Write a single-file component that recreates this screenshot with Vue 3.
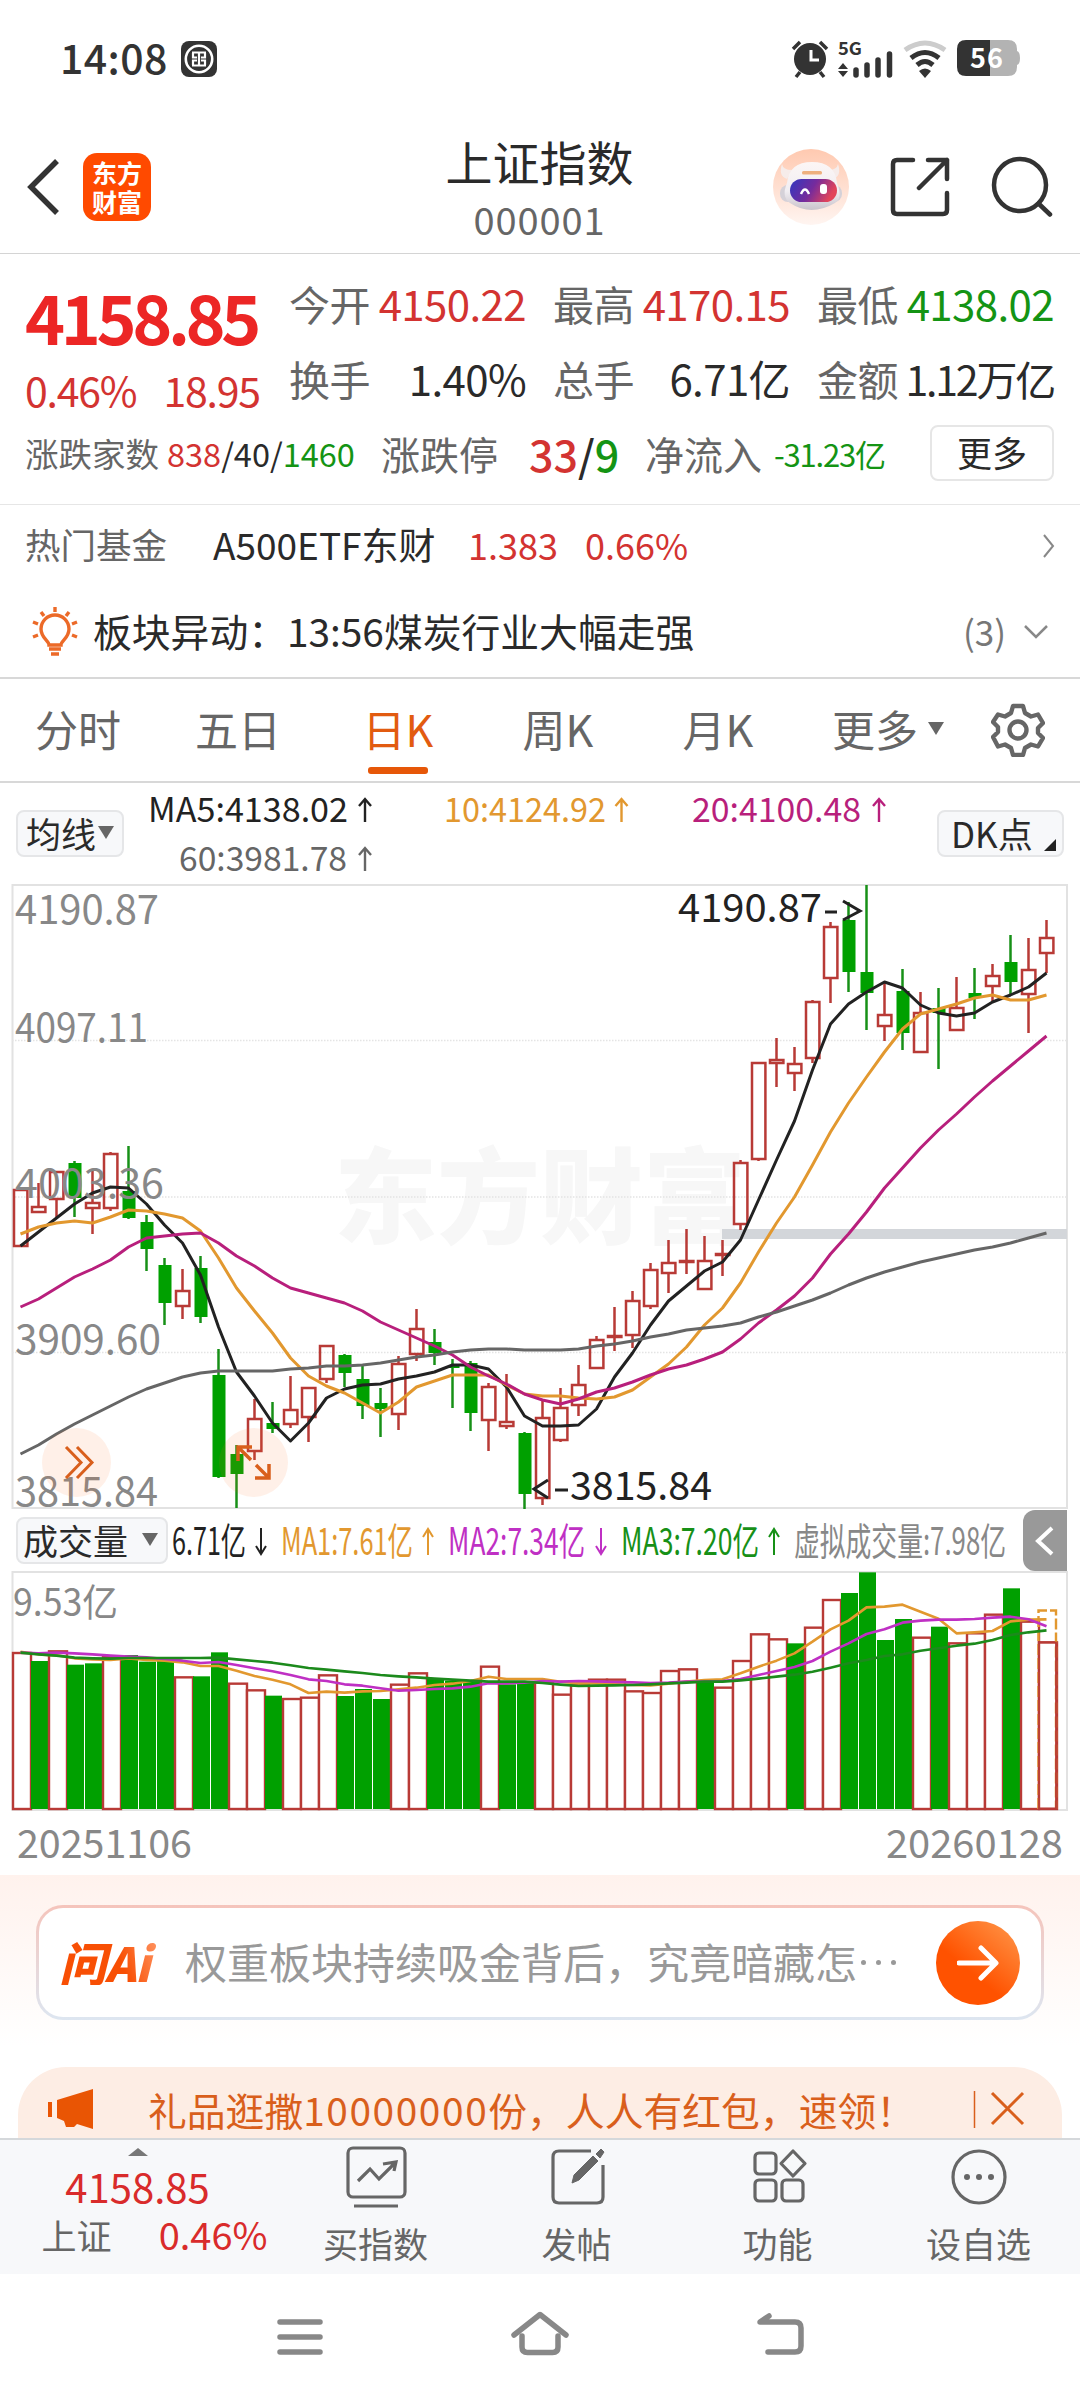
<template>
  <div class="page">
    <div class="status">
      <span class="time">14:08</span>
      <svg class="bank" width="36" height="36" viewBox="0 0 36 36">
        <rect width="36" height="36" rx="8" fill="#333" />
        <circle cx="18" cy="18" r="13.200" fill="none" stroke="#fff" stroke-width="2.600" />
        <path d="M11 11.500h14M11 24.500h14M18 12v12M12 12v4.500h4M12 24v-4.500h4M24 12v4.500h-4M24 24v-4.500h-4" fill="none" stroke="#fff" stroke-width="2.200" />
      </svg>
      <svg class="sys" width="232" height="42" viewBox="790 38 232 42">
        <circle cx="810" cy="59" r="16" fill="#333" />
        <path d="M793 49l7-7M827 49l-7-7M800 72l-4 5M820 72l4 5" stroke="#333" stroke-width="3.500" />
        <path d="M811 50v10h8" fill="none" stroke="#fff" stroke-width="3" />
        <text x="838" y="55" font-size="17.500" font-weight="700" fill="#333" textLength="24" lengthAdjust="spacingAndGlyphs">5G</text>
        <path d="M838 69l5-6 5 6zM838 71l5 6 5-6z" fill="#333" />
        <path d="M856 70v5M867 65v10M878 60v15M889.500 54v21" stroke="#333" stroke-width="5.500" stroke-linecap="round" />
        <path d="M905 50q20-14 40 0" fill="none" stroke="#ccc" stroke-width="5" />
        <path d="M911 58q14-11 28 0M917 65q8-7 16 0" fill="none" stroke="#333" stroke-width="5" />
        <path d="M919 71q6-5 12 0l-6 7z" fill="#333" />
        <path d="M990 40h18q9 0 9 9v2q3 1 3 7t-3 7v2q0 9-9 9h-18z" fill="#b3b3b3" />
        <path d="M990 40h-24q-9 0-9 9v18q0 9 9 9h24z" fill="#333" />
        <text x="970" y="68" font-size="27" font-weight="700" fill="#fff" textLength="33">56</text>
      </svg>
    </div>

    <header class="head">
      <div class="head-left">
        <svg width="34" height="58" viewBox="0 0 34 58"><path d="M31 3L5 29l26 26" fill="none" stroke="#333" stroke-width="5.500" /></svg>
        <div class="logo"><span>东方</span><span>财富</span></div>
      </div>
      <div class="title">
        <h1>上证指数</h1>
        <p>000001</p>
      </div>
      <div class="head-right">
        <svg width="76" height="76" viewBox="0 0 76 76">
          <defs>
            <linearGradient id="rb" x1="0" y1="0" x2="0" y2="1"><stop offset="0" stop-color="#ffc9b0" /><stop offset="1" stop-color="#fff5f1" /></linearGradient>
            <linearGradient id="rh" x1="0" y1="0" x2="0" y2="1"><stop offset="0" stop-color="#fcf6f5" /><stop offset="0.600" stop-color="#f1eef2" /><stop offset="1" stop-color="#c9c3cb" /></linearGradient>
            <linearGradient id="rf" x1="0" y1="0" x2="1" y2="0.300"><stop offset="0" stop-color="#3038c0" /><stop offset="0.550" stop-color="#762b9c" /><stop offset="1" stop-color="#e2445a" /></linearGradient>
          </defs>
          <circle cx="38" cy="38" r="38" fill="url(#rb)" />
          <path d="M9 15q1 6 10 6l-5 9q-9-3-5-15zM65 15q-1 6-10 6l5 9q9-3 5-15z" fill="#f6ecea" />
          <rect x="7" y="36" width="62" height="17" rx="8" fill="#d5d1d8" />
          <path d="M14 34Q16 13 39 13T64 34Q70 49 62 54Q38 68 17 54Q8 48 14 34z" fill="url(#rh)" />
          <rect x="17" y="30" width="47" height="23" rx="11.500" fill="url(#rf)" />
          <path d="M28 45q4-9 8 0" fill="none" stroke="#fff" stroke-width="2.500" />
          <rect x="47" y="35" width="7" height="10" rx="3" fill="#fff" />
          <rect x="29" y="22" width="20" height="3.500" rx="1.500" fill="#eeb07e" />
        </svg>
        <svg width="60" height="60" viewBox="0 0 60 60" fill="none" stroke="#333" stroke-width="4.500" stroke-linejoin="round" stroke-linecap="round">
          <path d="M23 3H7q-4 0-4 4v46q0 4 4 4h46q4 0 4-4V36M38 3h19v19M57 3L29 31" />
        </svg>
        <svg width="62" height="62" viewBox="0 0 62 62" fill="none" stroke="#333" stroke-width="4.500" stroke-linecap="round">
          <circle cx="29" cy="29" r="26" /><path d="M47.500 47.500l11.500 11" />
        </svg>
      </div>
    </header>

    <section class="quote">
      <div class="price-box">
        <div class="price">4158.85</div>
        <div class="chg"><span>0.46%</span><span>18.95</span></div>
      </div>
      <div class="cells">
        <div v-for="c in cells" :key="c.k" class="cell">
          <span class="k">{{ c.k }}</span><span :class="c.cls">{{ c.v }}</span>
        </div>
      </div>
      <div class="row3">
        <span class="k r1">涨跌家数</span>
        <span class="r2"><i class="up">838</i>/40/<i class="down">1460</i></span>
        <span class="k r3">涨跌停</span>
        <span class="r4"><i class="up">33</i>/<i class="down">9</i></span>
        <span class="k r5">净流入</span>
        <span class="r6 down">-31.23亿</span>
        <span class="more">更多</span>
      </div>
    </section>

    <section class="news">
      <div class="fund">
        <span class="k">热门基金</span>
        <span class="name">A500ETF东财</span>
        <span class="up f1">1.383</span>
        <span class="up">0.66%</span>
        <svg width="12" height="24" viewBox="0 0 12 24"><path d="M1 1l9 11-9 11" fill="none" stroke="#888" stroke-width="2" /></svg>
      </div>
      <div class="alert">
        <svg width="46" height="50" viewBox="0 0 46 50" fill="none" stroke="#ec6a28" stroke-width="3.400">
          <path d="M17 38c0-4-8-7-8-16a14 14 0 0 1 28 0c0 9-8 12-8 16z" />
          <path d="M17 42h12M19 47h8M23 0v5M9 5l3 4M37 5l-3 4M1 15l5 2M45 15l-5 2M1 30l5-2M45 30l-5-2" />
        </svg>
        <span class="msg">板块异动：13:56煤炭行业大幅走强</span>
        <span class="cnt">(3)</span>
        <svg width="24" height="14" viewBox="0 0 24 14"><path d="M1 1l11 11L23 1" fill="none" stroke="#888" stroke-width="2.500" /></svg>
      </div>
    </section>

    <nav class="tabs">
      <div v-for="(t, i) in tabs" :key="t" class="tab" :class="{ on: i === 2 }">
        {{ t }}<b v-if="i === 5" class="tri"></b>
      </div>
      <svg width="54" height="54" viewBox="0 0 54 54" fill="none" stroke="#666" stroke-width="4.400">
        <path d="M22 3h10l2 7 6 3.500 7-2 5 8.500-5 5v5l5 5-5 8.500-7-2-6 3.500-2 7H22l-2-7-6-3.500-7 2L2 34l5-5v-5l-5-5 5-7.500 7 2 6-3.500z" stroke-linejoin="round" />
        <circle cx="27" cy="27" r="8.500" />
      </svg>
    </nav>

    <section class="ma-head">
      <div class="btn">均线<b class="tri"></b></div>
      <svg width="800" height="102" viewBox="130 783 800 102" font-size="34">
        <g v-for="m in mas" :key="m.t" :fill="m.c" :stroke="m.c">
          <text :x="m.x" :y="m.y" :textLength="m.w" stroke="none" lengthAdjust="spacingAndGlyphs">{{ m.t }}</text>
          <path :d="`M${m.a} ${m.y}v-23m-6 7l6-7l6 7`" fill="none" stroke-width="2.400" />
        </g>
      </svg>
      <div class="btn dk">DK点<b class="corner"></b></div>
    </section>

    <!-- K线主图 -->
    <svg class="kline" width="1080" height="626" viewBox="0 884 1080 626">
      <text x="334" y="1236" font-size="104" font-weight="900" fill="#f7f7f7" textLength="412" lengthAdjust="spacingAndGlyphs">东方财富</text>
      <path d="M12.500 885H1067V1508H12.500z" fill="none" stroke="#e2e2e2" stroke-width="2" />
      <path d="M12 1040.500H1067M12 1197H1067M12 1352.500H1067" stroke="#e4e4e4" stroke-width="1.500" stroke-dasharray="1.500 1.500" />
      <rect x="722" y="1229" width="345" height="10" fill="#d3d6da" />
      <g v-for="(k, i) in candles" :key="i">
        <template v-if="k[0]">
          <path :d="`M${cx(i)} ${k[3]}V${k[1]}M${cx(i)} ${k[2]}V${k[4]}`" stroke="#b83a36" stroke-width="2.500" />
          <rect :x="cx(i) - 6.500" :y="k[1] + 1" width="13.400" :height="Math.max(k[2] - k[1] - 2, 1)" fill="none" stroke="#b83a36" stroke-width="2.500" />
        </template>
        <template v-else>
          <path :d="`M${cx(i)} ${k[3]}V${k[4]}`" stroke="#179017" stroke-width="2.500" />
          <rect :x="cx(i) - 6" :y="k[1]" width="13" :height="k[2] - k[1]" fill="#00a000" />
        </template>
      </g>
      <polyline v-for="l in lines" :key="l.c" :points="pts(l.d)" fill="none" :stroke="l.c" stroke-width="3" stroke-linejoin="round" />
      <g font-size="40" fill="#888">
        <text v-for="l in labels" :key="l.t" x="15" :y="l.y" :textLength="l.w" lengthAdjust="spacingAndGlyphs">{{ l.t }}</text>
      </g>
      <g font-size="39.500" fill="#222">
        <text x="678" y="922" textLength="144" lengthAdjust="spacingAndGlyphs">4190.87</text>
        <text x="570" y="1500" textLength="142" lengthAdjust="spacingAndGlyphs">3815.84</text>
        <path d="M825 912h12M843 901l17 10-17 9M555 1490h13M548 1480l-14 9 14 9" fill="none" stroke="#222" stroke-width="3" />
      </g>
      <circle cx="76.500" cy="1462.500" r="34.500" fill="#ff6a1f" fill-opacity="0.100" />
      <circle cx="253.500" cy="1462.500" r="34.500" fill="#ff6a1f" fill-opacity="0.100" />
      <g fill="none" stroke="#d95f1c" stroke-width="3">
        <path d="M66 1447l15 15.500-15 15.500M77 1447l15 15.500-15 15.500" />
        <path d="M251 1460l-13-13M238 1461v-14h14M256 1465l13 13M269 1464v14h-14" stroke-width="3.500" />
      </g>
    </svg>

    <!-- 成交量指标头 -->
    <section class="vol-head">
      <div class="btn vol-btn">成交量<b class="tri"></b></div>
      <svg width="850" height="61" viewBox="168 1510 850 61" font-size="38">
        <g v-for="m in vols" :key="m.t" :fill="m.c" :stroke="m.c">
          <text :x="m.x" y="1555" :textLength="m.w" stroke="none" lengthAdjust="spacingAndGlyphs">{{ m.t }}</text>
          <path v-if="m.a" :d="m.up ? `M${m.a} 1555v-26m-5 8l5-8l5 8` : `M${m.a} 1528v26m-5-8l5 8l5-8`" fill="none" stroke-width="2" />
        </g>
      </svg>
      <div class="fold">
        <svg width="20" height="30" viewBox="0 0 20 30"><path d="M17 2L3 15l14 13" fill="none" stroke="#fff" stroke-width="4" /></svg>
      </div>
    </section>

    <svg class="volume" width="1080" height="304" viewBox="0 1571 1080 304">
      <path d="M12.500 1572H1067V1810H12.500z" fill="none" stroke="#e2e2e2" stroke-width="2" />
      <text x="13" y="1616" font-size="38" fill="#888" textLength="105" lengthAdjust="spacingAndGlyphs">9.53亿</text>
      <template v-for="(v, i) in bars" :key="i">
        <rect v-if="v > 0" :x="cx(i) - 7.500" :y="vy(v) + 1" width="18" :height="1808 - vy(v)" fill="#fff" stroke="#b83a36" stroke-width="2.400" />
        <rect v-else :x="cx(i) - 7.500" :y="vy(-v)" width="17" :height="1809 - vy(-v)" fill="#00a000" />
      </template>
      <path d="M1038.500 1809V1610.500H1056V1809" fill="none" stroke="#e2982f" stroke-width="2.400" stroke-dasharray="11 3" />
      <rect x="1039" y="1642.500" width="17" height="166" fill="none" stroke="#b83a36" stroke-width="1.800" />
      <polyline v-for="l in volLines" :key="l.c" :points="pts(l.d.map(vy))" fill="none" :stroke="l.c" stroke-width="2.600" stroke-linejoin="round" />
      <g font-size="39.500" fill="#888">
        <text x="17" y="1858" textLength="175" lengthAdjust="spacingAndGlyphs">20251106</text>
        <text x="886" y="1858" textLength="177" lengthAdjust="spacingAndGlyphs">20260128</text>
      </g>
    </svg>

    <section class="ask">
      <div class="ask-box">
        <span class="ai">问Ai</span>
        <span class="q">权重板块持续吸金背后，究竟暗藏怎</span><span class="dots"><i></i><i></i><i></i></span>
        <div class="go">
          <svg width="42" height="38" viewBox="0 0 42 38" fill="none" stroke="#fff" stroke-width="5"><path d="M2 19h36M24 4l15 15-15 15" stroke-linejoin="round" stroke-linecap="round" /></svg>
        </div>
      </div>
      <div class="banner">
        <svg width="46" height="40" viewBox="0 0 46 40" fill="#e95504"><path d="M0 13h4v15H0zM9 11L45 0v40l-16-5-3 3h-8l-2-6-7-3z" /></svg>
        <span>礼品逛撒<i>10000000</i>份，人人有红包，速领！</span>
        <svg width="52" height="38" viewBox="973 2093 52 38" fill="none" stroke="#d95f1c"><path d="M974.500 2094v37" stroke-width="1.500" /><path d="M992 2096l31 31M1023 2096l-31 31" stroke-width="3" /></svg>
      </div>
    </section>

    <footer class="bar">
      <div class="idx">
        <b class="caret"></b>
        <div class="n">4158.85</div>
        <div class="m"><span>上证</span><span class="p">0.46%</span></div>
      </div>
      <div class="item">
        <svg width="64" height="64" viewBox="0 0 64 64"><rect x="4" y="3" width="57" height="49" rx="5" /><path d="M10 61h44M14 36l12-12 9 10 16-16M39 19l13-2-2 9" /></svg>
        <span>买指数</span>
      </div>
      <div class="item">
        <svg width="64" height="64" viewBox="0 0 64 64"><path d="M46 6H14q-6 0-6 6v40q0 6 6 6h38q6 0 6-6V20" /><path d="M27 38l2-8 19-19 5 5-19 19zM51 9l5-5 3 3-4 6z" fill="#666" stroke-width="1" /></svg>
        <span>发帖</span>
      </div>
      <div class="item">
        <svg width="64" height="64" viewBox="0 0 64 64"><rect x="9" y="8" width="21" height="21" rx="4" /><rect x="9" y="35" width="21" height="21" rx="4" /><rect x="36" y="35" width="21" height="21" rx="4" /><path d="M47 6l12 12.500L47 31 35 18.500z" stroke-linejoin="round" /></svg>
        <span>功能</span>
      </div>
      <div class="item">
        <svg width="64" height="64" viewBox="0 0 64 64"><circle cx="32" cy="32" r="26" /><g fill="#666" stroke="none"><circle cx="20" cy="32" r="3" /><circle cx="32" cy="32" r="3" /><circle cx="44" cy="32" r="3" /></g></svg>
        <span>设自选</span>
      </div>
    </footer>

    <div class="sysnav">
      <svg width="1080" height="126" viewBox="0 2274 1080 126" fill="none" stroke="#888" stroke-width="5.500" stroke-linecap="round">
        <path d="M280 2322h40M280 2337h40M280 2352h40" />
        <path d="M514 2335l26-20.500 26 20.500M522 2336v11q0 5.500 5.500 5.500h25q5.500 0 5.500-5.500v-11" stroke-linejoin="round" />
        <path d="M768 2352h27q6 0 6-6v-18q0-6-6-6h-35l9-6" stroke-linejoin="round" />
      </svg>
    </div>
  </div>
</template>

<script setup>
const cells = [
  { k: '今开', v: '4150.22', cls: 'up' },
  { k: '最高', v: '4170.15', cls: 'up' },
  { k: '最低', v: '4138.02', cls: 'down' },
  { k: '换手', v: '1.40%', cls: '' },
  { k: '总手', v: '6.71亿', cls: '' },
  { k: '金额', v: '1.12万亿', cls: 'tight' }
]

const tabs = ['分时', '五日', '日K', '周K', '月K', '更多']

const mas = [
  { t: 'MA5:4138.02', x: 148, y: 822, w: 200, a: 365, c: '#222' },
  { t: '10:4124.92', x: 444, y: 822, w: 162, a: 621.5, c: '#e2982f' },
  { t: '20:4100.48', x: 692, y: 822, w: 169, a: 879, c: '#b81f7c' },
  { t: '60:3981.78', x: 179, y: 871, w: 168, a: 365, c: '#666' }
]

const labels = [
  { t: '4190.87', y: 924, w: 144 },
  { t: '4097.11', y: 1042, w: 133 },
  { t: '4003.36', y: 1198, w: 149 },
  { t: '3909.60', y: 1354, w: 146 },
  { t: '3815.84', y: 1506, w: 143 }
]

const vols = [
  { t: '6.71亿', x: 172, w: 74, a: 261, c: '#222' },
  { t: 'MA1:7.61亿', x: 281, w: 132, a: 428, up: true, c: '#e2982f' },
  { t: 'MA2:7.34亿', x: 448, w: 137, a: 601, c: '#bf30c4' },
  { t: 'MA3:7.20亿', x: 621, w: 138, a: 774, up: true, c: '#179017' },
  { t: '虚拟成交量:7.98亿', x: 794, w: 212, c: '#888' }
]

// [阳线, 实体顶, 实体底, 最高, 最低]
const candles = [
  [1, 1189, 1247, 1189, 1247], [1, 1206, 1213, 1183, 1213], [1, 1171, 1200, 1171, 1217], [0, 1163, 1198, 1161, 1217],
  [1, 1202, 1209, 1169, 1234], [1, 1153, 1209, 1152, 1211], [0, 1191, 1218, 1146, 1219], [0, 1222, 1249, 1215, 1271],
  [0, 1265, 1303, 1258, 1325], [1, 1290, 1307, 1269, 1319], [0, 1268, 1317, 1256, 1323], [0, 1375, 1477, 1349, 1478],
  [0, 1454, 1474, 1445, 1508], [1, 1418, 1452, 1399, 1460], [0, 1423, 1429, 1402, 1433], [1, 1409, 1425, 1376, 1428],
  [1, 1387, 1418, 1387, 1442], [1, 1345, 1380, 1345, 1383], [0, 1355, 1373, 1354, 1387], [0, 1379, 1406, 1366, 1419],
  [0, 1403, 1409, 1388, 1437], [1, 1363, 1415, 1356, 1430], [1, 1328, 1355, 1309, 1361], [0, 1342, 1353, 1329, 1365],
  [0, 1366, 1368, 1359, 1408], [0, 1363, 1413, 1361, 1431], [1, 1386, 1421, 1383, 1451], [1, 1421, 1427, 1374, 1429],
  [0, 1433, 1494, 1432, 1509], [1, 1417, 1499, 1401, 1505], [1, 1407, 1441, 1388, 1442], [1, 1384, 1406, 1365, 1416],
  [1, 1339, 1369, 1336, 1369], [1, 1335, 1338, 1307, 1351], [1, 1300, 1336, 1291, 1348], [1, 1269, 1307, 1263, 1309],
  [1, 1262, 1274, 1240, 1293], [1, 1260, 1262, 1229, 1274], [1, 1260, 1290, 1236, 1290], [1, 1253, 1255, 1240, 1276],
  [1, 1162, 1225, 1160, 1230], [1, 1062, 1160, 1062, 1161], [1, 1059, 1064, 1038, 1087], [1, 1063, 1074, 1047, 1091],
  [1, 1001, 1059, 1000, 1063], [1, 926, 979, 922, 1003], [0, 920, 972, 902, 992], [0, 972, 993, 885, 1030],
  [1, 1014, 1027, 983, 1041], [0, 991, 1033, 969, 1050], [1, 1012, 1053, 992, 1053], [0, 1008, 1013, 988, 1069],
  [1, 1007, 1031, 977, 1031], [0, 993, 998, 968, 1019], [1, 975, 987, 964, 1001], [0, 962, 982, 935, 995],
  [1, 969, 995, 938, 1033], [1, 937, 954, 920, 973]
]

const lines = [
  { c: '#222', d: [1246, 1232, 1218, 1204, 1193, 1187, 1188, 1204, 1225, 1243, 1275, 1327, 1372, 1396, 1423, 1441, 1423, 1398, 1389, 1385, 1384, 1379, 1376, 1372, 1365, 1365, 1369, 1387, 1416, 1426, 1426, 1425, 1409, 1377, 1353, 1325, 1301, 1286, 1271, 1262, 1240, 1200, 1160, 1121, 1070, 1024, 1004, 992, 982, 988, 1005, 1013, 1016, 1013, 1002, 995, 987, 973] },
  { c: '#e2982f', d: [1234, 1227, 1223, 1221, 1223, 1217, 1210, 1211, 1214, 1218, 1231, 1258, 1288, 1311, 1333, 1358, 1376, 1386, 1393, 1403, 1413, 1402, 1387, 1381, 1375, 1375, 1375, 1385, 1394, 1396, 1396, 1398, 1399, 1397, 1390, 1377, 1364, 1347, 1325, 1308, 1283, 1252, 1223, 1197, 1165, 1132, 1103, 1077, 1052, 1029, 1014, 1009, 1004, 998, 995, 1000, 1000, 995] },
  { c: '#b81f7c', d: [1307, 1299, 1288, 1277, 1269, 1260, 1247, 1238, 1236, 1234, 1233, 1243, 1256, 1266, 1278, 1288, 1293, 1298, 1303, 1311, 1322, 1330, 1338, 1346, 1355, 1367, 1376, 1384, 1394, 1400, 1404, 1399, 1392, 1388, 1382, 1375, 1369, 1365, 1359, 1352, 1339, 1323, 1310, 1296, 1278, 1254, 1234, 1212, 1188, 1168, 1148, 1130, 1114, 1097, 1081, 1066, 1051, 1036] },
  { c: '#666', d: [1454, 1445, 1434, 1424, 1415, 1406, 1397, 1389, 1383, 1377, 1373, 1371, 1371, 1371, 1371, 1369, 1368, 1366, 1366, 1365, 1363, 1360, 1357, 1355, 1352, 1350, 1349, 1349, 1350, 1350, 1350, 1349, 1346, 1344, 1341, 1337, 1334, 1330, 1328, 1326, 1323, 1317, 1312, 1306, 1300, 1293, 1285, 1278, 1272, 1267, 1262, 1258, 1254, 1250, 1247, 1243, 1238, 1233] }
]

// 柱顶位置，以 1/3 像素为单位，负数为绿柱
const bars = [456, -483, 451, -494, -490, 468, -465, -485, -483, 529, -529, -457, 548, 568, -587, 594, 590, 523, -588, -567, -597, 551, 517, -535, -542, -545, 497, -553, -545, 545, 581, 553, 536, 536, 571, 576, 510, 505, -540, 560, 480, 400, 415, -430, 380, 297, -279, -217, -420, -357, 410, -380, 427, 397, 341, -265, 362, 424]

const volLines = [
  { c: '#e2982f', d: [455, 463, 466, 475, 478, 480, 475, 480, 482, 487, 498, 498, 512, 528, 539, 553, 579, 575, 578, 574, 573, 568, 563, 555, 551, 543, 530, 537, 537, 537, 545, 550, 550, 552, 555, 556, 551, 545, 540, 538, 520, 500, 482, 460, 425, 388, 362, 322, 320, 314, 335, 356, 400, 397, 393, 364, 359, 358] },
  { c: '#bf30c4', d: [458, 460, 458, 460, 463, 467, 470, 472, 477, 482, 489, 486, 495, 505, 514, 525, 538, 543, 553, 557, 565, 572, 570, 567, 565, 560, 550, 550, 548, 543, 545, 543, 544, 546, 547, 549, 548, 545, 545, 543, 537, 525, 513, 501, 483, 455, 430, 402, 388, 368, 362, 359, 359, 357, 353, 350, 358, 379] },
  { c: '#1c8a1c', d: [458, 463, 467, 473, 475, 476, 474, 474, 474, 474, 474, 473, 478, 483, 488, 496, 504, 509, 514, 519, 525, 529, 532, 536, 539, 542, 545, 545, 545, 549, 554, 558, 557, 556, 555, 553, 550, 548, 545, 545, 541, 536, 530, 524, 515, 503, 490, 480, 468, 463, 452, 445, 437, 431, 420, 405, 397, 391] }
]

const cx = i => 20.5 + i * 18
const vy = v => 1500 + v / 3
const pts = arr => arr.map((y, i) => `${cx(i)},${y}`).join(' ')
</script>

<style>
body {
  background: #fff;
}
</style>

<style scoped>
.page {
  width: 1080px;
  height: 2400px;
  overflow: hidden;
  background: #fff;
  color: #2a2a2a;
  font-family: "Noto Sans CJK SC", sans-serif;
  line-height: 1;
  white-space: nowrap;
}
.page svg {
  display: block;
  flex: none;
}
.page * {
  box-sizing: border-box;
}
i {
  font-style: normal;
}
.up {
  color: #d33331;
}
.down {
  color: #149414;
}
.k {
  color: #666;
}
.status {
  height: 118px;
  padding: 0 58px 0 60px;
  display: flex;
  align-items: center;
}
.time {
  font-size: 41px;
  font-weight: 500;
  color: #333;
  width: 121px;
  letter-spacing: 0.4px;
  padding-bottom: 5px;
}
.sys {
  margin-left: auto;
}
.head {
  height: 136px;
  padding: 0 27px 0 26px;
  display: grid;
  grid-template-columns: 1fr auto 1fr;
  border-bottom: 1px solid #d4d4d4;
}
.head-left {
  display: flex;
  align-items: center;
  gap: 23px;
  padding-top: 3px;
}
.logo {
  width: 68px;
  height: 68px;
  border-radius: 14px;
  background: #ff4a00;
  color: #fff;
  font-size: 25px;
  font-weight: 700;
  display: flex;
  flex-direction: column;
  align-items: center;
  justify-content: center;
  gap: 4px;
}
.title {
  text-align: center;
  padding-top: 19px;
}
.title h1 {
  margin: 0;
  font-size: 47px;
  font-weight: 400;
}
.title p {
  margin: 16px 0 0;
  font-size: 38px;
  line-height: 38px;
  letter-spacing: 0.9px;
  color: #666;
}
.head-right {
  display: flex;
  align-items: center;
  justify-content: flex-end;
  gap: 41px;
  padding-top: 3px;
}
.quote {
  height: 251px;
  padding: 22px 24px 0 25px;
  border-bottom: 1px solid #e6e6e6;
  display: grid;
  grid-template-columns: 264px 765px;
  grid-template-rows: 148px 56px;
}
.price {
  margin-top: 6px;
  font-size: 68px;
  font-weight: 700;
  line-height: 68px;
  color: #ec2625;
  letter-spacing: -4.400px;
}
.chg {
  margin-top: 19px;
  display: flex;
  gap: 27px;
  font-size: 41px;
  letter-spacing: -1.200px;
  color: #d33331;
}
.cells {
  display: grid;
  grid-template-columns: repeat(3, 237px);
  grid-template-rows: 54px 54px;
  row-gap: 21px;
  column-gap: 27px;
}
.cell {
  display: flex;
  align-items: center;
  justify-content: space-between;
  font-size: 42px;
  letter-spacing: -0.600px;
}
.cell .k {
  font-size: 41px;
}
.cell .tight {
  font-size: 41px;
  letter-spacing: -2.200px;
}
.row3 {
  grid-column: 1 / 3;
  display: flex;
  align-items: center;
  padding-top: 2px;
}
.r1 {
  width: 142px;
  font-size: 33.500px;
}
.r2 {
  width: 214px;
  font-size: 32.500px;
}
.r3 {
  width: 148px;
  font-size: 39px;
}
.r4 {
  width: 116px;
  font-size: 43px;
  font-weight: 500;
}
.r5 {
  width: 129px;
  font-size: 39px;
}
.r6 {
  font-size: 31px;
  letter-spacing: -1.200px;
}
.more {
  margin-left: auto;
  width: 124px;
  height: 56px;
  border: 2px solid #e6e6e6;
  border-radius: 8px;
  text-align: center;
  font-size: 35px;
  line-height: 49px;
}
.news {
  height: 174px;
  border-bottom: 2px solid #d8d8d8;
}
.fund {
  height: 82px;
  padding: 0 25px 4px;
  display: flex;
  align-items: center;
  font-size: 36px;
}
.fund .k {
  width: 188px;
  font-size: 35.500px;
}
.fund .name {
  width: 255px;
  font-size: 37px;
}
.fund .f1 {
  width: 117px;
}
.fund svg {
  margin: 4px 0 0 auto;
}
.alert {
  height: 90px;
  padding: 0 32px;
  display: flex;
  align-items: center;
}
.msg {
  margin-left: 15px;
  padding-bottom: 3px;
  font-size: 38.800px;
}
.cnt {
  margin: 0 18px 3px auto;
  font-size: 35px;
  color: #777;
}
.tabs {
  height: 104px;
  border-bottom: 2px solid #d8d8d8;
  display: grid;
  grid-template-columns: repeat(6, 160px) 116px;
  align-items: center;
}
.tab {
  height: 102px;
  padding: 0 4px 3px 0;
  display: flex;
  align-items: center;
  justify-content: center;
  position: relative;
  font-size: 43px;
  color: #666;
}
.tabs svg {
  justify-self: center;
}
.tab.on {
  color: #e25b10;
}
.tab.on::after {
  content: "";
  position: absolute;
  left: 48px;
  bottom: 7px;
  width: 60px;
  height: 7px;
  border-radius: 3px;
  background: #e65708;
}
.tri {
  border: 8px solid transparent;
  border-top: 13px solid #666;
  border-bottom: 0;
}
.tab .tri {
  margin-left: 10px;
  margin-right: -20px;
}
.ma-head {
  height: 101px;
  padding: 0 16px;
  display: flex;
  align-items: center;
}
.btn {
  width: 108px;
  height: 47px;
  padding-bottom: 3px;
  border: 2px solid #e5e6e8;
  border-radius: 8px;
  background: #f7f8fa;
  font-size: 35px;
  display: flex;
  align-items: center;
  justify-content: center;
}
.btn .tri {
  margin-left: 2px;
}
.ma-head svg {
  margin-left: 6px;
}
.dk {
  width: 127px;
  margin-left: auto;
  justify-content: flex-start;
  padding-left: 12px;
}
.corner {
  margin: 25px 0 0 11px;
  border: 6px solid #222;
  border-left-color: transparent;
  border-top-color: transparent;
}
.vol-head {
  height: 61px;
  padding: 0 13px 0 16px;
  display: flex;
  align-items: center;
}
.vol-btn {
  width: 152px;
  padding-right: 3px;
}
.vol-btn .tri {
  margin-left: 14px;
}
.fold {
  margin-left: auto;
  width: 44px;
  height: 61px;
  border-radius: 12px 0 0 12px;
  background: #999;
  display: flex;
  align-items: center;
  justify-content: center;
}
.ask {
  height: 263px;
  padding: 30px 18px 0;
  overflow: hidden;
  background: linear-gradient(#fff2ed, #fff 170px);
}
.ask-box {
  height: 115px;
  margin: 0 18px;
  padding: 0 21px;
  border: 3px solid transparent;
  border-radius: 27px;
  background: linear-gradient(#fff, #fff) padding-box, linear-gradient(#f5c4bb, #dde6f1) border-box;
  display: flex;
  align-items: center;
}
.ai {
  width: 128px;
  margin: 0 0 3px -3px;
  padding-left: 2px;
  font-size: 47px;
  font-weight: 900;
  font-style: italic;
  letter-spacing: -1px;
  color: transparent;
  background: linear-gradient(70deg, #f84f04 50%, #ff9360 80%);
  background-clip: text;
}
.q {
  padding-bottom: 3px;
  font-size: 42px;
  color: #999;
}
.dots {
  display: flex;
  gap: 10px;
  margin-left: 4px;
}
.dots i {
  width: 5px;
  height: 5px;
  border-radius: 50%;
  background: #999;
}
.go {
  width: 84px;
  height: 84px;
  margin-left: auto;
  border-radius: 50%;
  background: linear-gradient(40deg, #ff5200 40%, #ff9a4d);
  display: flex;
  align-items: center;
  justify-content: center;
}
.banner {
  height: 84px;
  margin-top: 47px;
  padding: 0 37px 0 30px;
  border-radius: 48px 48px 0 0;
  background: #fdede4;
  display: flex;
  align-items: center;
  font-size: 38.800px;
  color: #d95f1c;
}
.banner span {
  margin-left: 54px;
}
.banner i {
  letter-spacing: 1.600px;
}
.banner svg:last-child {
  margin-left: auto;
}
.bar {
  height: 136px;
  border-top: 2px solid #d5d8db;
  background: #f7f8fa;
  display: grid;
  grid-template-columns: 275px repeat(4, 201px);
}
.idx {
  display: flex;
  flex-direction: column;
  align-items: center;
}
.caret {
  margin-top: 8px;
  border: 10px solid transparent;
  border-bottom: 8px solid #777;
  border-top: 0;
}
.n {
  margin-top: 10px;
  font-size: 40px;
  color: #d92b2b;
}
.m {
  width: 226px;
  margin: 9px 0 0 34px;
  display: flex;
  align-items: center;
  justify-content: space-between;
  font-size: 35px;
  color: #666;
}
.p {
  font-size: 38px;
  color: #d92b2b;
}
.item {
  padding-top: 5px;
  display: flex;
  flex-direction: column;
  align-items: center;
  font-size: 35px;
  color: #666;
}
.item svg {
  fill: none;
  stroke: #666;
  stroke-width: 3.200;
}
.item span {
  margin-top: 16px;
}
</style>
